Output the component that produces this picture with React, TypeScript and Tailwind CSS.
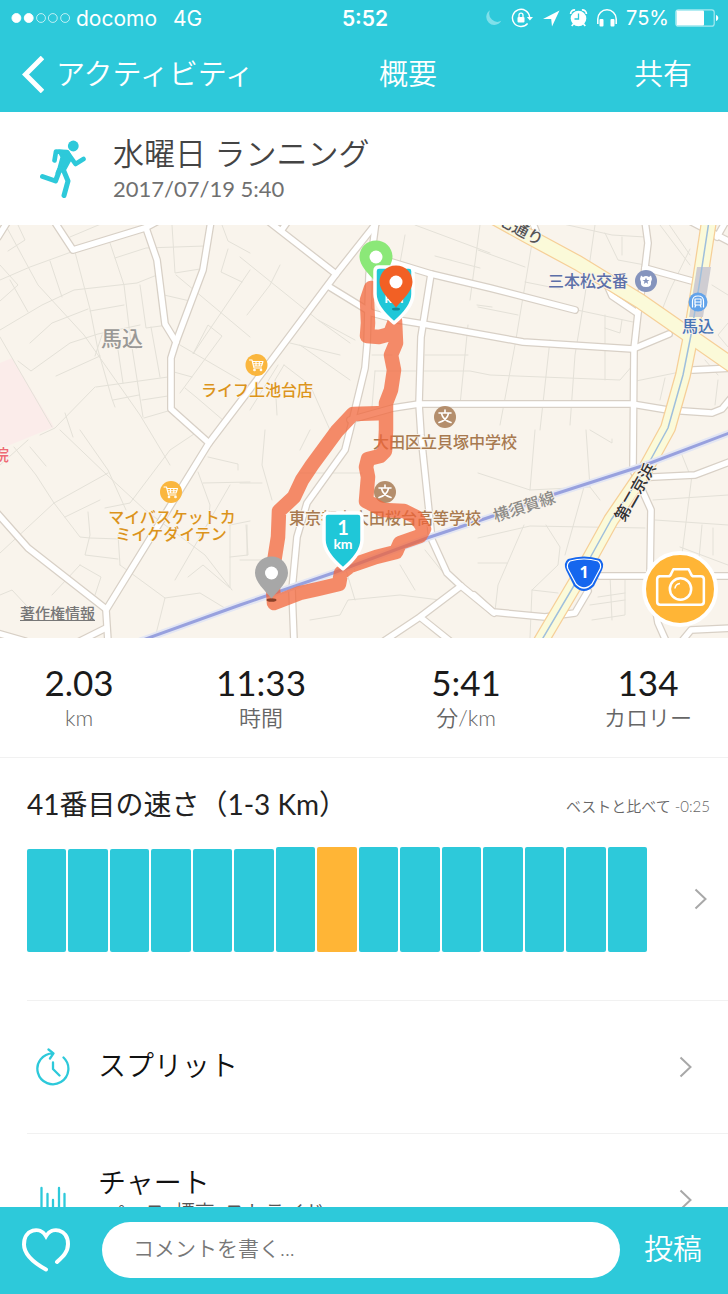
import type { ReactNode } from "react";

const stats = [
  { value: "2.03", label: "km" },
  { value: "11:33", label: "時間" },
  { value: "5:41", label: "分/km" },
  { value: "134", label: "カロリー" },
];

const paceBars = [103, 103, 103, 103, 103, 103, 105, 105, 105, 105, 105, 105, 105, 105, 105];
const currentBar = 7;

const minorStreets = [
  "M0 -10L38 60L84 110L140 190L170 240",
  "M0 55L30 42L74 26",
  "M0 105L42 80L74 65L137 58L157 50",
  "M0 40L18 60L0 76M0 112L52 202",
  "M75 27L90 84L98 125L112 174L115 182",
  "M110 18L124 60L130 110L143 192",
  "M115 33L146 23L205 21M172 0L175 48L200 44",
  "M8 26L25 15L18 0M70 12L108 -4",
  "M30 118L52 98L88 84M90 86L124 80",
  "M95 162L55 203L40 210M95 131L102 110",
  "M151 102L160 152M140 60L146 103L168 100",
  "M18 136L31 146L70 118L98 109L140 100",
  "M96 162L168 152M113 175L139 170M142 175L168 171",
  "M144 193L168 186M56 151L100 131",
  "M118 125L123 158M50 36L62 72M28 87L10 55",
  "M65 188L73 212",
  "M164 70L190 76M176 50L250 112",
  "M222 0L228 16L250 28M228 24L221 47L242 57",
  "M250 45L193 129L208 100L222 111L180 168",
  "M174 147L192 152M180 120L240 155M185 163L196 172L224 196",
  "M60 205L107 250L145 285L205 330L232 365",
  "M14 222L36 250L54 278L80 312L90 313L120 314",
  "M0 240L28 215M65 292L100 275M108 248L54 278L0 328",
  "M88 287L90 310L85 330L118 334M80 340L101 352L95 370",
  "M105 283L130 278L170 225L200 205",
  "M30 222L46 241M80 205L108 245L126 285",
  "M0 370L12 365L40 395M52 370L80 340",
  "M120 340L165 373L155 413M120 340L118 310",
  "M165 373L200 368L228 385M175 355L230 260",
  "M188 352L203 340L230 363L230 300M203 258L250 257",
  "M198 247L210 280L208 300M208 232L238 239V245",
  "M230 300L250 296M246 300L248 330L230 332",
  "M240 32L318 95L355 115M247 90L270 60L280 40",
  "M290 118L340 130M318 95L350 118M278 140L250 185",
  "M284 140L275 155L277 190M284 140L310 160L330 205",
  "M300 120L350 155M265 205L262 240L272 275",
  "M405 10L400 38M435 31L480 43M480 0L470 75",
  "M477 80L492 82M415 0L490 28",
  "M372 130L392 130M375 146L470 146L490 150L620 155L633 140",
  "M425 130L468 130M468 100L460 180",
  "M372 182L375 146",
  "M300 248L362 248M310 205L300 225",
  "M240 258L262 258M240 335L270 335M247 300L247 330",
  "M330 310L355 345M310 395L340 390L348 375L400 370L440 375",
  "M346 345L355 375M400 340L415 365M425 325L445 350",
  "M478 25L525 42M535 0L525 60L515 120L500 200",
  "M595 0L590 35L585 70L575 130L570 200",
  "M550 -4L612 10L645 12",
  "M605 8L618 35L645 40M622 12V30M478 82L518 90",
  "M605 90L605 155M622 95L620 108L605 103M577 85L633 97",
  "M525 57L560 64M690 24L670 65L660 90",
  "M660 0L690 40M728 70L712 60M668 -2L690 30",
  "M636 156L680 147M665 153L660 175M550 115L540 205",
  "M728 98L718 110L728 122M705 135L718 150M718 155L715 180",
  "M478 248L530 265L535 205M530 265L590 262L586 205",
  "M590 262L600 275M584 262L565 330",
  "M478 313L530 301L645 303M546 300L560 322L558 340L532 365L530 413",
  "M478 338L507 338M524 300L498 360L495 386M532 365L558 368",
  "M590 205L612 218V214M680 225L690 250",
  "M653 275L728 270M655 295L728 300M692 250L680 345",
  "M702 300L698 345M713 303V330M680 322L728 340",
  "M598 372L625 368M590 380L625 375M610 350L612 395M625 355L625 390L592 395",
];

const streets = [
  "M-2 12L8 -4",
  "M54 -4L73 25L145 3L160 -5M146 3L157 35L165 99L176 117",
  "M211 -4L203 45L176 117L171 133L171 184L209 218",
  "M378 -4L336 49L250 164L209 218L106 385L108 416",
  "M-3 288L28 323L106 384M80 416L106 403M-3 408L25 416",
  "M268 -4L336 49M288 -4L281 6",
  "M328 61L372 88L398 95L423 99L490 111L523 117L633 124L669 109",
  "M385 35L431 49L490 63L575 85",
  "M431 49L421 112L419 179L421 210L432 315L447 348L461 361L494 388",
  "M376 -4L369 50L367 120L365 143L350 205L345 225L307 278L297 312L292 365L294 416",
  "M350 195L393 183L419 179L632 179L668 185L712 188L722 184L732 172",
  "M645 -4L648 18L645 43L638 88L634 124L633 245L651 285L650 352L658 398L666 416",
  "M608 62L612 71L637 88M645 43L692 56M693 145L732 143",
  "M640 253L653 252L695 250L732 236M600 351L732 351",
  "M474 370L493 387L545 392L575 388L588 366",
  "M461 361L420 392L384 416M420 392L450 416M682 416L691 405L732 403",
  "M686 -6L732 18M717 12L726 -4M532 -4L536 6",
];

const highways = [
  "M490 -10L528 11L578 38L640 76L732 140",
  "M709 -4L700 55L691 110L683 150L668 203L645 245L611 295L585 342L540 418",
];

const railway = "M140 416L240 380L333 348L427 313L490 292L555 269L645 240L732 207";

const runRoute =
  "M371 63L367 75L368 98L367 111L379 112L390 109L395 96L396 118L391 130L394 145L391 165L386 178L386 205L385 226L380 231L368 234L366 242L368 252L366 276L383 285L404 286L416 292L424 304L420 311L400 318L396 327L376 332L350 341L341 348L339 359L318 364L300 368L274 378L272 350L278 312L279 286L294 272L302 255L312 240L337 206L353 189L386 188";

function ChevronIcon() {
  return (
    <svg className="h-[22px] w-[14px] shrink-0" viewBox="0 0 14 22" fill="none" aria-hidden>
      <path d="M1.5 1.5L11.5 11L1.5 20.5" stroke="#a8a8a8" strokeWidth="2" />
    </svg>
  );
}

function StatusIcons() {
  return (
    <svg className="h-5 w-[134px]" viewBox="0 0 134 20" fill="none" aria-hidden>
      <path d="M6 2.2a8 8 0 1 0 11.3 10.6A8.2 8.2 0 0 1 6 2.2z" fill="#7fe0ea" />
      <path d="M43.6 15.5a8.6 8.6 0 1 1 2 -6.500" stroke="#fff" strokeWidth="1.4" />
      <path d="M42.8 9H49L45.900 12.600z" fill="#fff" />
      <rect x="33.500" y="9" width="7" height="5.500" rx="1" fill="#fff" />
      <path d="M35 9V7.2a2 2 0 0 1 4 0V9" stroke="#fff" strokeWidth="1.3" />
      <path d="M59 11L75.5 2.5L68 18.5L67.2 11z" fill="#fff" />
      <circle cx="94.5" cy="10.5" r="7.8" fill="#fff" />
      <path d="M86.6 6a4 4 0 0 1 4.5-4M102.4 6a4 4 0 0 0-4.5-4M89.5 16l-1.8 2M99.5 16l1.800 2" stroke="#fff" strokeWidth="1.7" />
      <path d="M94.5 5.5v5.5h-4" stroke="#2dc9da" strokeWidth="1.3" />
      <path d="M113.8 16v-5a9.2 9.2 0 0 1 18.4 0v5" stroke="#fff" strokeWidth="1.5" />
      <rect x="115.5" y="11" width="4" height="7.5" rx="1" fill="#fff" />
      <rect x="126.5" y="11" width="4" height="7.5" rx="1" fill="#fff" />
    </svg>
  );
}

function StatusBar() {
  return (
    <div className="grid h-9 grid-cols-[1fr_auto_1fr] items-center pl-[11px] pr-[9px] font-['Inter','Liberation_Sans',sans-serif] text-[21px] leading-none text-white">
      <div className="flex items-center">
        <svg className="mr-1 h-3 w-[61px]" viewBox="0 0 62 12" fill="none" stroke="#fff" aria-hidden>
          <circle cx="5.5" cy="6" r="4.5" fill="#fff" />
          <circle cx="18" cy="6" r="4.5" fill="#fff" />
          <circle cx="30.5" cy="6" r="4.5" strokeOpacity=".7" />
          <circle cx="42.5" cy="6" r="4.5" strokeOpacity=".7" />
          <circle cx="55" cy="6" r="4.5" strokeOpacity=".7" />
        </svg>
        <span>docomo</span>
        <span className="ml-4">4G</span>
      </div>
      <span className="font-semibold">5:52</span>
      <div className="flex items-center justify-end gap-2">
        <StatusIcons />
        <div className="flex items-center gap-[6px]">
          <span className="text-[20px]">75%</span>
          <svg className="h-[18px] w-[44px]" viewBox="0 0 44 18" fill="none" aria-hidden>
            <rect x=".8" y=".8" width="38.4" height="16.4" rx="2.5" stroke="#a5e9f0" strokeWidth="1.2" />
            <rect x="1.5" y="1.5" width="27.5" height="15" rx="1" fill="#fff" />
            <path d="M41 6c3 1 3 5 0 6z" fill="#fff" />
          </svg>
        </div>
      </div>
    </div>
  );
}

function Pin({ x, y, color }: { x: number; y: number; color: string }) {
  return (
    <g transform={`translate(${x} ${y})`}>
      <path d="M0 -16.5C9.5 -16.5 16.5 -9.2 16.5 0C16.5 9 7 17 0 25.5C-7 17 -16.5 9 -16.5 0C-16.5 -9.2 -9.5 -16.5 0 -16.5z" fill={color} />
      <circle r="6.5" fill="#fff" />
    </g>
  );
}

function KmBadge({ x, y, km }: { x: number; y: number; km: number }) {
  return (
    <g transform={`translate(${x} ${y})`} className="font-['Lato',sans-serif] font-bold" fill="#fff" textAnchor="middle">
      <path d="M-15 2H15Q19 2 19 6V29Q19 42 0 58Q-19 42 -19 29V6Q-19 2 -15 2z" fill="#1fc7d8" stroke="#fff" strokeWidth="3.5" />
      <text y="24" fontSize="20">{km}</text>
      <text y="38" fontSize="14">km</text>
    </g>
  );
}

function PoiDot({ x, y, color, children }: { x: number; y: number; color: string; children: ReactNode }) {
  return (
    <g transform={`translate(${x} ${y})`}>
      <circle r="11" fill={color} />
      {children}
    </g>
  );
}

function CartGlyph() {
  return (
    <g stroke="#fff" strokeWidth="1.1" fill="none">
      <path d="M-7 -5H-4.500L-2.500 3H5M-4 -3.500H6.500L5 1H-3M-.5 -3.500V1M2.800 -3.500V1M-3.500 -1.300H6" />
      <circle cx="-2" cy="5" r=".8" />
      <circle cx="4.5" cy="5" r=".8" />
    </g>
  );
}

function SchoolGlyph() {
  return <path d="M0 -7V-4M-6 -4H6M-3.500 -3.500C-2.500 1 1 4 6 5.500M3.500 -3.500C2.500 1 -1 4 -6 5.500" stroke="#fff" strokeWidth="1.6" fill="none" />;
}

function RouteMap() {
  return (
    <section className="relative" aria-label="ルートマップ">
      <svg
        className="block h-auto w-full font-['Noto_Sans_CJK_JP',sans-serif] font-medium"
        viewBox="0 0 728 413"
        fill="none"
        strokeLinejoin="round"
        strokeLinecap="round"
      >
        <rect width="728" height="413" fill="#f9f4ec" />
        <path d="M0 138L12 133L54 202L0 224z" fill="#fbecea" />
        <g stroke="#e4e1d8" strokeWidth="1">
          {minorStreets.map((d) => (
            <path key={d} d={d} />
          ))}
        </g>
        <g stroke="#d8d0c6" strokeWidth="8">
          {streets.map((d) => (
            <path key={d} d={d} />
          ))}
        </g>
        <g stroke="#fff" strokeWidth="5.5">
          {streets.map((d) => (
            <path key={d} d={d} />
          ))}
        </g>
        <g stroke="#f6cf98" strokeWidth="16">
          {highways.map((d) => (
            <path key={d} d={d} />
          ))}
        </g>
        <g stroke="#fbfad9" strokeWidth="13.5">
          {highways.map((d) => (
            <path key={d} d={d} />
          ))}
        </g>
        <path d="M697 42H711L703 92H689z" fill="#cfcdd2" />
        <path d={highways[1]} stroke="#9fbfdc" strokeWidth="1.5" />
        <path d={railway} stroke="#e3e6f3" strokeWidth="7" />
        <path d={railway} stroke="#98a1de" strokeWidth="3" />

        <PoiDot x={256.5} y={140} color="#fab63e">
          <CartGlyph />
        </PoiDot>
        <PoiDot x={171} y={267} color="#fab63e">
          <CartGlyph />
        </PoiDot>
        <PoiDot x={445} y={192} color="#b48e6c">
          <SchoolGlyph />
        </PoiDot>
        <PoiDot x={385} y={267} color="#b48e6c">
          <SchoolGlyph />
        </PoiDot>
        <PoiDot x={646} y={56} color="#8594bd">
          <path d="M-5 -5.500L-3 -4Q0 -6 3 -4L5 -5.500L6 -2L5 1Q6 6 0 6Q-6 6 -5 1L-6 -2z" fill="#fff" />
          <path d="M0 -3.500L1 -1H3.500L1.500 .6L2.200 3L0 1.500L-2.200 3L-1.500 .6L-3.500 -1H-1z" fill="#8594bd" />
        </PoiDot>
        <g transform="translate(698 77)">
          <circle r="9.5" fill="#62a3ea" />
          <path d="M-5.500 5V-1Q-5.500 -6 0 -6Q5.500 -6 5.500 -1V5" stroke="#fff" strokeWidth="1.2" />
          <path d="M-3 -3H3V3H-3zM-3 0H3M-2 3L-3 5M2 3L3 5" stroke="#fff" strokeWidth="1.2" />
        </g>

        <g fontSize="16" stroke="#f9f4ec" strokeWidth="2" paintOrder="stroke" textAnchor="middle">
          <text x="122" y="121" fontSize="21" fill="#999896">馬込</text>
          <text x="257" y="171" fill="#dc941c">ライフ上池台店</text>
          <text x="172" y="298" fill="#dc941c">マイバスケットカ</text>
          <text x="171" y="315" fill="#dc941c">ミイケダイテン</text>
          <text x="445" y="223" fill="#a87a50">大田区立貝塚中学校</text>
          <text x="385" y="299" fill="#a87a50">東京都立大田桜台高等学校</text>
          <text x="588" y="62" fill="#5c6fa8">三本松交番</text>
          <text x="698" y="107" fill="#4873b4">馬込</text>
          <text x="1" y="236" fill="#ee6a74">院</text>
          <text fill="#8d8b88" transform="translate(526 287) rotate(-18)">横須賀線</text>
          <text fill="#333" transform="translate(640 270) rotate(-60)">第二京浜</text>
          <text fill="#555" transform="translate(511 6) rotate(28)">環七通り</text>
        </g>

        <path d={runRoute} stroke="#f1653a" strokeOpacity=".74" strokeWidth="14.5" />

        <Pin x={376} y={32} color="#8be878" />
        <KmBadge x={394} y={40} km={2} />
        <ellipse cx="396" cy="84" rx="4" ry="1.5" fill="#148a98" />
        <Pin x={396} y={57} color="#f26024" />
        <KmBadge x={343} y={286} km={1} />
        <ellipse cx="271.5" cy="375" rx="5" ry="1.8" fill="#8a4028" />
        <Pin x={271.5} y={348} color="#a7a7a7" />

        <path d="M568 334Q584 329 600 334Q605 338 602 345L594 361Q584 371 574 361L566 345Q563 338 568 334z" fill="#1566ee" />
        <path d="M570 336Q584 332 598 336Q602 339 600 344L592 359Q584 367 576 359L568 344Q566 339 570 336z" stroke="#fff" strokeWidth="1.2" />
        <text x="584" y="353" fontSize="16" textAnchor="middle" fill="#fff" className="font-['Open_Sans',sans-serif] font-bold">1</text>
      </svg>
      <a href="#legal" className="absolute bottom-[14px] left-5 font-['Noto_Sans_CJK_JP',sans-serif] text-[15px] font-medium text-[#777] underline">
        著作権情報
      </a>
      <button type="button" aria-label="写真を追加" className="absolute bottom-[11px] right-[10px] rounded-full border-4 border-white bg-[#ffb536]">
        <svg className="h-[68px] w-[68px]" viewBox="0 0 67 67" fill="none" stroke="#fff" strokeWidth="2.5" strokeLinejoin="round" aria-hidden>
          <path d="M13 21H22Q24 21 25 18L27 14H42L44 18Q45 21 47 21H54Q57 21 57 24V46Q57 49 54 49H14Q11 49 11 46V24Q11 21 14 21z" />
          <circle cx="34" cy="33.5" r="10.5" />
          <path d="M28.500 33Q29 28.500 33.500 28" strokeWidth="1.5" />
        </svg>
      </button>
    </section>
  );
}

function Activity() {
  return (
    <section className="flex h-[113px] items-center pl-10">
      <svg className="h-[58px] w-[46px] shrink-0" viewBox="0 0 46 58" fill="none" stroke="#2dc9da" strokeLinecap="round" strokeLinejoin="round" aria-hidden>
        <circle cx="33.3" cy="6" r="5.4" fill="#2dc9da" stroke="none" />
        <path d="M19 11L28 12L31 18L25 29L17 33L19 28L22 17z" fill="#2dc9da" strokeWidth="3" />
        <path d="M14.500 20.500L16 11.500L27 12L35.500 24L43.500 19" strokeWidth="4.6" />
        <path d="M20 29L15.500 41L2.500 36.500M23 29L28 41L24 55.500" strokeWidth="5" />
      </svg>
      <div className="ml-[27px]">
        <h2 className="text-[31px] font-[350] leading-10 text-[#444]">水曜日 ランニング</h2>
        <p className="text-[22px] leading-8 text-[#707070]">2017/07/19 5:40</p>
      </div>
    </section>
  );
}

function PaceChart() {
  return (
    <section className="pl-[27px]">
      <div className="flex items-center justify-between pb-5 pr-[18px] pt-6">
        <h3 className="text-[28px] leading-[44px] text-[#222]">41番目の速さ（1-3 Km）</h3>
        <span className="pt-1 text-[15px] font-[350] text-[#666]">ベストと比べて -0:25</span>
      </div>
      <button type="button" aria-label="速さの詳細" className="flex w-full items-center pb-12 pr-5">
        <span className="flex h-[106px] flex-1 items-end gap-[2px]">
          {paceBars.map((height, i) => (
            <span
              key={i}
              className={`flex-1 rounded-[2px] ${i === currentBar ? "bg-[#ffb536]" : "bg-[#2dc9da]"}`}
              style={{ height }}
            />
          ))}
        </span>
        <span className="ml-[47px]">
          <ChevronIcon />
        </span>
      </button>
    </section>
  );
}

function SplitIcon() {
  return (
    <svg className="h-[38px] w-[34px]" viewBox="0 0 34 38" fill="none" stroke="#2dc9da" strokeWidth="2.3" strokeLinecap="round" strokeLinejoin="round" aria-hidden>
      <path d="M27.500 9.500A15.500 15.500 0 1 1 17 5.300M12.500 1.500L17.500 5.300L14 10.500M17 14.500V21L23.500 27.500" />
    </svg>
  );
}

function ChartIcon() {
  return (
    <svg className="mx-1 h-[36px] w-[26px]" viewBox="0 0 26 36" stroke="#2dc9da" strokeWidth="2.3" strokeLinecap="round" aria-hidden>
      <path d="M1.500 6V34M7.500 12V34M13 18V34M19 6V34M24.500 12V34" />
    </svg>
  );
}

function MenuRow({ icon, title, detail }: { icon: ReactNode; title: string; detail?: string }) {
  return (
    <a href="#detail" className="ml-[27px] flex h-[133px] items-center border-t border-[#f1f1f1] pl-[9px] pr-[35px]">
      <span className="shrink-0">{icon}</span>
      <span className={`ml-7 flex-1 ${detail ? "pb-3" : "pb-1"}`}>
        <span className="block text-[28px] font-[350] leading-9 text-[#111]">{title}</span>
        {detail && <span className="block pl-2 text-[20px] font-[350] leading-6 text-[#555]">{detail}</span>}
      </span>
      <ChevronIcon />
    </a>
  );
}

export default function App() {
  return (
    <div className="flex h-screen flex-col bg-white font-['Lato','Noto_Sans_CJK_JP',sans-serif]">
      <header className="shrink-0 bg-[#2dc9da] text-white">
        <StatusBar />
        <nav className="grid h-[76px] grid-cols-[7fr_auto_5fr] items-center pl-[22px] pr-9 text-[29px] font-[350]">
          <a href="#activities" className="flex items-center whitespace-nowrap">
            <svg className="mr-3 h-[37px] w-[22px]" viewBox="0 0 22 37" fill="none" aria-hidden>
              <path d="M20.500 1.500L3.500 18.500L20.500 35.500" stroke="#fff" strokeWidth="5" />
            </svg>
            アクティビティ
          </a>
          <h1>概要</h1>
          <button type="button" className="justify-self-end">共有</button>
        </nav>
      </header>

      <main className="min-h-0 flex-1 overflow-y-auto [scrollbar-width:none]">
        <Activity />
        <RouteMap />
        <dl className="grid h-[120px] grid-cols-[158fr_206fr_204fr_160fr] items-center border-b border-[#f1f1f1] text-center">
          {stats.map((s) => (
            <div key={s.label} className="flex flex-col-reverse">
              <dt className="text-[22px] font-[350] leading-8 text-[#666]">{s.label}</dt>
              <dd className="text-[35px] font-normal leading-10 text-[#1a1a1a]">{s.value}</dd>
            </div>
          ))}
        </dl>
        <PaceChart />
        <MenuRow icon={<SplitIcon />} title="スプリット" />
        <MenuRow icon={<ChartIcon />} title="チャート" detail="ペース, 標高, ストライド" />
      </main>

      <footer className="flex h-[87px] shrink-0 items-center bg-[#2dc9da] pb-0.5 pl-[22px] pr-[26px]">
        <button type="button" aria-label="いいね">
          <svg className="h-[44px] w-[48px]" viewBox="0 0 48 44" fill="none" stroke="#fff" strokeWidth="4" strokeLinecap="round" aria-hidden>
            <path d="M24 41.500C14 36 2 27 2 16.500C2 1 18 -2 24 8C30 -2 46 1 46 16C46 24 41 28.500 35 34" />
          </svg>
        </button>
        <input
          type="text"
          aria-label="コメント"
          placeholder="コメントを書く..."
          className="ml-8 h-14 min-w-0 flex-1 rounded-full bg-white px-[31px] pb-1 text-[21px] font-[350] text-[#333] outline-none placeholder:text-[#777]"
        />
        <button type="button" className="ml-6 pb-0.5 text-[29px] font-[350] text-white">投稿</button>
      </footer>
    </div>
  );
}
